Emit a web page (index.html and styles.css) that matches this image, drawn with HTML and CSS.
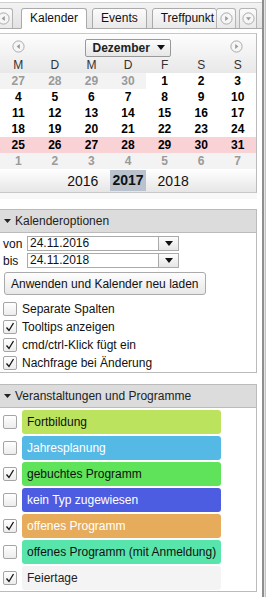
FILE: index.html
```html
<!DOCTYPE html>
<html lang="de">
<head>
    <meta charset="UTF-8">
    <meta name="viewport" content="width=device-width, initial-scale=1.0">
    <title>Kalender</title>
    <link rel="stylesheet" href="styles.css">
</head>
<body>
    <div class="layout">
        <div class="panel">
            <div class="tabbar">
                <div class="tabstrip">
                    <div class="tab-btn clipped">
                        <svg width="13" height="13" viewBox="0 0 13 13"><circle cx="6.5" cy="6.5" r="5.6" fill="#f6f6f6" stroke="#aaa"/><path d="M7.8 4 L4.6 6.5 L7.8 9Z" fill="#9a9a9a"/></svg>
                    </div>
                    <div class="tab active">Kalender</div>
                    <div class="tab">Events</div>
                    <div class="tab last">Treffpunkt</div>
                </div>
                <div class="tab-btn">
                    <svg width="13" height="13" viewBox="0 0 13 13"><circle cx="6.5" cy="6.5" r="5.6" fill="#f6f6f6" stroke="#aaa"/><path d="M5.2 4 L8.4 6.5 L5.2 9Z" fill="#9a9a9a"/></svg>
                </div>
                <div class="tab-btn menu">
                    <svg width="13" height="13" viewBox="0 0 13 13"><circle cx="6.5" cy="6.5" r="5.6" fill="#f6f6f6" stroke="#aaa"/><path d="M4 5.2 L9 5.2 L6.5 8.4Z" fill="#9a9a9a"/></svg>
                </div>
            </div>

            <div class="content">
                <div class="calendar">
                    <div class="cal-head">
                        <div class="cal-nav">
                            <svg width="13" height="13" viewBox="0 0 13 13"><circle cx="6.5" cy="6.5" r="5.6" fill="#f6f6f6" stroke="#aaa"/><path d="M7.8 4 L4.6 6.5 L7.8 9Z" fill="#9a9a9a"/></svg>
                            <div class="month-select">
                                <span>Dezember</span>
                                <svg width="8" height="5" viewBox="0 0 8 5"><path d="M0 0 L8 0 L4 5Z" fill="#111"/></svg>
                            </div>
                            <svg width="13" height="13" viewBox="0 0 13 13"><circle cx="6.5" cy="6.5" r="5.6" fill="#f6f6f6" stroke="#aaa"/><path d="M5.2 4 L8.4 6.5 L5.2 9Z" fill="#9a9a9a"/></svg>
                        </div>
                        <div class="weekdays">
                            <span>M</span><span>D</span><span>M</span><span>D</span><span>F</span><span>S</span><span>S</span>
                        </div>
                    </div>
                    <div class="days">
                        <span class="other">27</span><span class="other">28</span><span class="other">29</span><span class="other">30</span><span>1</span><span>2</span><span>3</span>
                        <span>4</span><span>5</span><span>6</span><span>7</span><span>8</span><span>9</span><span>10</span>
                        <span>11</span><span>12</span><span>13</span><span>14</span><span>15</span><span>16</span><span>17</span>
                        <span>18</span><span>19</span><span>20</span><span>21</span><span>22</span><span>23</span><span>24</span>
                        <span class="hl">25</span><span class="hl">26</span><span class="hl">27</span><span class="hl">28</span><span class="hl">29</span><span class="hl">30</span><span class="hl">31</span>
                        <span class="other">1</span><span class="other">2</span><span class="other">3</span><span class="other">4</span><span class="other">5</span><span class="other">6</span><span class="other">7</span>
                    </div>
                    <div class="years">
                        <span>2016</span>
                        <span class="current">2017</span>
                        <span>2018</span>
                    </div>
                </div>
                <div class="cal-foot"></div>

                <div class="section options">
                    <div class="section-head">
                        <svg width="7" height="4" viewBox="0 0 7 4"><path d="M0 0 L7 0 L3.5 4Z" fill="#222"/></svg>
                        Kalenderoptionen
                    </div>
                    <div class="section-body">
                        <div class="date-row">
                            <span class="date-label">von</span>
                            <span class="date-input">24.11.2016</span>
                            <span class="date-drop"><svg width="8" height="5" viewBox="0 0 8 5"><path d="M0 0 L8 0 L4 5Z" fill="#111"/></svg></span>
                        </div>
                        <div class="date-row">
                            <span class="date-label">bis</span>
                            <span class="date-input">24.11.2018</span>
                            <span class="date-drop"><svg width="8" height="5" viewBox="0 0 8 5"><path d="M0 0 L8 0 L4 5Z" fill="#111"/></svg></span>
                        </div>
                        <button class="apply">Anwenden und Kalender neu laden</button>
                        <div class="check-list">
                            <label class="check-row"><span class="box"></span>Separate Spalten</label>
                            <label class="check-row"><span class="box checked"><svg width="12" height="12" viewBox="0 0 12 12"><path d="M2.5 6.5 L5 9.5 L9.5 2" fill="none" stroke="#111" stroke-width="1.3"/></svg></span>Tooltips anzeigen</label>
                            <label class="check-row"><span class="box checked"><svg width="12" height="12" viewBox="0 0 12 12"><path d="M2.5 6.5 L5 9.5 L9.5 2" fill="none" stroke="#111" stroke-width="1.3"/></svg></span>cmd/ctrl-Klick fügt ein</label>
                            <label class="check-row"><span class="box checked"><svg width="12" height="12" viewBox="0 0 12 12"><path d="M2.5 6.5 L5 9.5 L9.5 2" fill="none" stroke="#111" stroke-width="1.3"/></svg></span>Nachfrage bei Änderung</label>
                        </div>
                    </div>
                </div>

                <div class="section events">
                    <div class="section-head">
                        <svg width="7" height="4" viewBox="0 0 7 4"><path d="M0 0 L7 0 L3.5 4Z" fill="#222"/></svg>
                        Veranstaltungen und Programme
                    </div>
                    <div class="section-body">
                        <div class="type-row"><span class="box"></span><span class="type fortbildung">Fortbildung</span></div>
                        <div class="type-row"><span class="box"></span><span class="type jahresplanung">Jahresplanung</span></div>
                        <div class="type-row"><span class="box checked"><svg width="12" height="12" viewBox="0 0 12 12"><path d="M2.5 6.5 L5 9.5 L9.5 2" fill="none" stroke="#111" stroke-width="1.3"/></svg></span><span class="type gebucht">gebuchtes Programm</span></div>
                        <div class="type-row"><span class="box"></span><span class="type ohne-typ">kein Typ zugewiesen</span></div>
                        <div class="type-row"><span class="box checked"><svg width="12" height="12" viewBox="0 0 12 12"><path d="M2.5 6.5 L5 9.5 L9.5 2" fill="none" stroke="#111" stroke-width="1.3"/></svg></span><span class="type offen">offenes Programm</span></div>
                        <div class="type-row"><span class="box"></span><span class="type anmeldung">offenes Programm (mit Anmeldung)</span></div>
                        <div class="type-row"><span class="box checked"><svg width="12" height="12" viewBox="0 0 12 12"><path d="M2.5 6.5 L5 9.5 L9.5 2" fill="none" stroke="#111" stroke-width="1.3"/></svg></span><span class="type feiertage">Feiertage</span></div>
                    </div>
                </div>
            </div>
        </div>
        <div class="splitter"></div>
    </div>
</body>
</html>
```

FILE: styles.css
```css
body {
    margin: 0;
    font-family: 'Liberation Sans', Arial, sans-serif;
    font-size: 12px;
    color: #111;
    background-color: #fff;
}

.layout {
    display: flex;
    width: 272px;
    min-height: 597px;
}

.panel {
    width: 262px;
    flex: 0 0 262px;
}

.splitter {
    width: 4px;
    background: linear-gradient(to right, #8e8e8e 0, #8e8e8e 2px, #e4e4e4 2px, #e4e4e4 3px, #c4c4c4 3px);
}

/* tab bar */

.tabbar {
    margin-top: 2px;
    height: 25px;
    border-top: 1px solid #cfcfcf;
    border-bottom: 1px solid #aaa;
    background: linear-gradient(#f3f3f3, #e2e2e2);
    display: flex;
    align-items: flex-end;
}

.tabstrip {
    flex: 0 0 216px;
    height: 26px;
    margin-bottom: -1px;
    overflow: hidden;
    display: flex;
    align-items: flex-end;
}

.tab {
    box-sizing: border-box;
    height: 21px;
    line-height: 19px;
    padding: 0 8px;
    margin-left: 5px;
    border: 1px solid #aaa;
    border-radius: 3px 3px 0 0;
    background: linear-gradient(#fbfbfb, #e9e9e9);
    white-space: nowrap;
    flex: none;
}

.tab.active {
    margin-left: 8px;
    background: #fff;
    border-bottom-color: #fff;
}

.tab.last {
    padding-right: 2px;
}

.tab-btn {
    box-sizing: border-box;
    width: 20px;
    height: 20px;
    border: 1px solid #b4b4b4;
    border-bottom: none;
    border-radius: 3px 3px 0 0;
    background: linear-gradient(#fbfbfb, #e9e9e9);
    display: flex;
    align-items: center;
    justify-content: center;
    flex: none;
}

.tab-btn.clipped {
    width: 19px;
    margin-left: -6px;
    margin-bottom: 1px;
}

.tab-btn.menu {
    width: 18px;
    margin-left: 3px;
}

/* content */

.content {
    padding-top: 4px;
    padding-right: 5px;
}

.calendar {
    border-top: 1px solid #c8c8c8;
    border-right: 1px solid #bbb;
    border-bottom: 1px solid #c8c8c8;
}

.cal-head {
    background: linear-gradient(#fdfdfd, #e8e8e8);
}

.cal-nav {
    height: 24px;
    padding: 0 13px 0 12px;
    display: flex;
    align-items: center;
    justify-content: space-between;
}

.month-select {
    box-sizing: border-box;
    height: 18px;
    width: 86px;
    margin-top: 3px;
    padding: 0 5px 0 7px;
    border: 1px solid #999;
    border-radius: 2px;
    background: linear-gradient(#fdfdfd, #e6e6e6);
    display: flex;
    align-items: center;
    justify-content: space-between;
    font-weight: bold;
    color: #222;
}

.weekdays,
.days {
    display: grid;
    grid-template-columns: repeat(7, 1fr);
    text-align: center;
}

.weekdays span {
    line-height: 15px;
    color: #333;
}

.days span {
    line-height: 16px;
    font-weight: bold;
    color: #000;
}

.days span.other {
    background-color: #f3f3f3;
    color: #9a9a9a;
}

.days span.hl {
    background-color: #f9d2d6;
}

.years {
    height: 23px;
    background: linear-gradient(#fff, #e6e6e6);
    display: flex;
    justify-content: center;
    align-items: center;
    gap: 12px;
    font-size: 14px;
    color: #111;
}

.years .current {
    padding: 2px 2px 3px;
    font-weight: bold;
    background-color: #bac2ce;
}

.cal-foot {
    height: 6px;
    margin-bottom: 10px;
    background-color: #f8f8f8;
}

/* sections */

.section {
    border-top: 1px solid #bbb;
    border-right: 1px solid #bbb;
    border-bottom: 1px solid #bbb;
}

.section.events {
    margin-top: 11px;
}

.section-head {
    height: 22px;
    padding-left: 4px;
    background-color: #dcdcdc;
    border-bottom: 1px solid #bbb;
    display: flex;
    align-items: center;
    gap: 4px;
    color: #222;
}

.options .section-body {
    padding: 2px 0 0 3px;
}

.date-row {
    display: flex;
    align-items: center;
    height: 17px;
}

.date-label {
    width: 24px;
}

.date-input {
    box-sizing: border-box;
    width: 131px;
    height: 15px;
    line-height: 13px;
    padding-left: 2px;
    border: 1px solid #aaa;
    border-right: none;
    background-color: #fff;
}

.date-drop {
    box-sizing: border-box;
    width: 21px;
    height: 15px;
    border: 1px solid #aaa;
    background: linear-gradient(#fdfdfd, #e6e6e6);
    display: flex;
    align-items: center;
    justify-content: center;
}

.apply {
    margin: 3px 0 0 1px;
    height: 23px;
    padding: 0 6px;
    border: 1px solid #aaa;
    border-radius: 3px;
    background: linear-gradient(#fefefe, #e8e8e8);
    font-family: inherit;
    font-size: 12px;
    color: #111;
}

.check-list {
    margin-top: 5px;
}

.check-row {
    display: flex;
    align-items: center;
    gap: 5px;
    height: 18px;
}

.box {
    box-sizing: border-box;
    width: 14px;
    height: 14px;
    border: 1px solid #a5a5a5;
    border-radius: 2px;
    background: linear-gradient(#fff, #ececec);
    display: flex;
    align-items: center;
    justify-content: center;
    flex: none;
}

.events .section-body {
    padding: 1px 0 0 3px;
}

.type-row {
    display: flex;
    align-items: center;
    gap: 5px;
    height: 26px;
}

.type {
    box-sizing: border-box;
    width: 199px;
    height: 24px;
    line-height: 24px;
    padding-left: 5px;
    border-radius: 3px;
    white-space: nowrap;
    color: #111;
}

.fortbildung { background-color: #bbe35e; }
.jahresplanung { background-color: #55b9e6; color: #fff; }
.gebucht { background-color: #5ee35a; }
.ohne-typ { background-color: #4c5de1; color: #fff; }
.offen { background-color: #e7ac5b; color: #fff; }
.anmeldung { background-color: #58e5ab; }
.feiertage { background-color: #f4f4f4; color: #222; }
```
